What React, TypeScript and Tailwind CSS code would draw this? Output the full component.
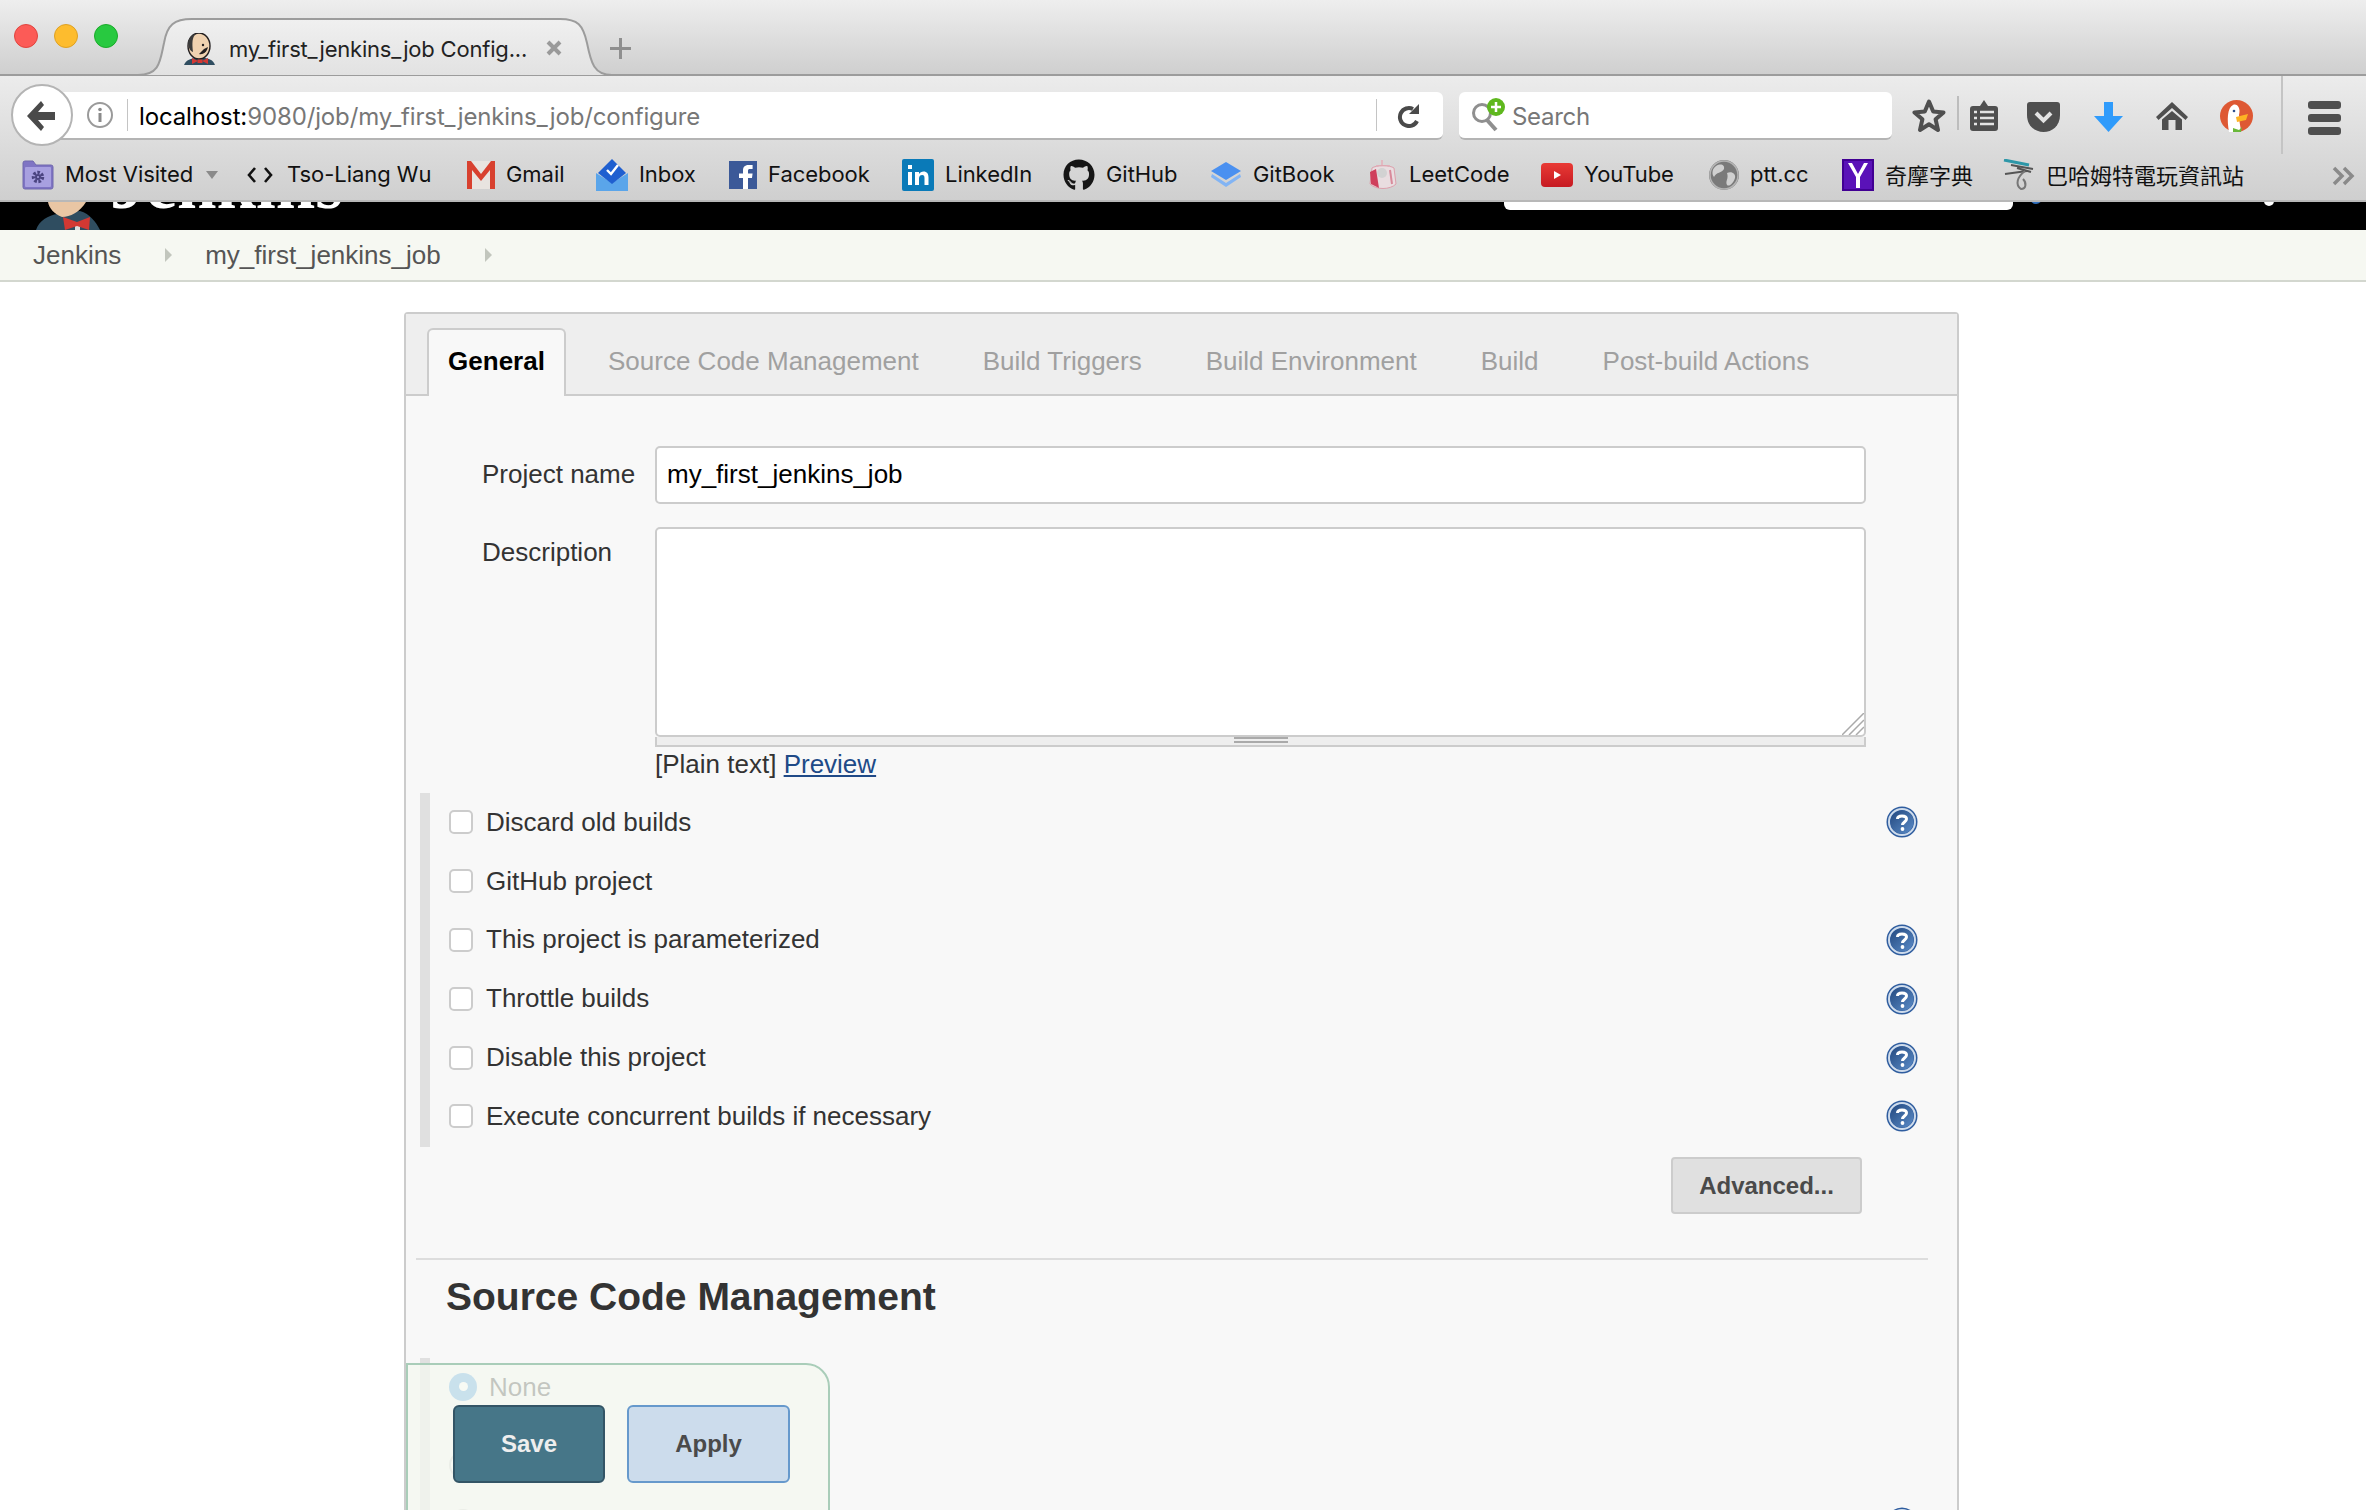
import { FaGithub } from "react-icons/fa";

const uiFont = "font-['Inter','Liberation_Sans',sans-serif]";

const Bookmark = ({ icon, label, iconW, textW, x }: { icon: React.ReactNode; label: string; iconW: number; textW: number; x: number }) => (
  <div className="flex items-center gap-[11px]" style={{ marginLeft: x, width: iconW + 11 + textW }}>
    <div className="flex items-center justify-center shrink-0" style={{ width: iconW }}>{icon}</div>
    <span className="whitespace-nowrap pb-[2px] text-[22px] text-[#111] tracking-[-0.05px]">{label}</span>
  </div>
);

const FolderIcon = () => (
  <svg width="32" height="32" viewBox="0 0 32 32">
    <path d="M1 4 a2 2 0 0 1 2-2 h8 l3 4 h15 a2 2 0 0 1 2 2 v20 a2 2 0 0 1-2 2 h-26 a2 2 0 0 1-2-2z" fill="#7f74c4" stroke="#7068ad" />
    <rect x="3" y="8" width="26" height="20" rx="1" fill="#a8a0e0" />
    <circle cx="16" cy="18" r="4.5" fill="none" stroke="#4b4480" strokeWidth="3.5" strokeDasharray="2.5 1.5" />
    <circle cx="16" cy="18" r="3" fill="#4b4480" />
    <circle cx="16" cy="18" r="1" fill="#a8a0e0" />
  </svg>
);

const CodeIcon = () => (
  <svg width="26" height="16" viewBox="0 0 26 16" fill="none">
    <path d="M8 1 L2 8 L8 15 M18 1 L24 8 L18 15" stroke="#111" strokeWidth="2.6" />
  </svg>
);

const GmailIcon = () => (
  <svg width="28" height="32" viewBox="0 0 28 32">
    <rect x="0" y="2" width="28" height="28" fill="#e8e4e0" />
    <path d="M0 30 V2 h4 L14 15 L24 2 h4 v28 h-5 V11 L14 22 L5 11 V30z" fill="#d8412f" />
  </svg>
);

const InboxIcon = () => (
  <svg width="32" height="32" viewBox="0 0 32 32">
    <path d="M0 14 L16 24 L32 14 V32 H0z" fill="#5aa5ea" />
    <path d="M2 14 L16 0 L30 14 L16 25z" fill="#1f5fd0" />
    <path d="M11 11 l4 4 l7-9" fill="none" stroke="#fff" strokeWidth="2.4" />
  </svg>
);

const FacebookIcon = () => (
  <svg width="28" height="28" viewBox="0 0 28 28">
    <rect width="28" height="28" fill="#3b5998" />
    <path d="M19 28 V17 h4 l.6-4.5 H19 V10 c0-1.4.5-2 2-2 h2.6 V4 h-4 C15.5 4 14 6.3 14 9.5 v3 h-4 V17 h4 v11z" fill="#fff" />
  </svg>
);

const LinkedInIcon = () => (
  <svg width="32" height="32" viewBox="0 0 32 32">
    <rect width="32" height="32" rx="2" fill="#0a7ab8" />
    <rect x="6" y="13" width="4" height="13" fill="#fff" />
    <rect x="6" y="6" width="4" height="4" fill="#fff" />
    <path d="M13 13 h4 v2 c1-1.5 2.5-2.4 4.5-2.4 c3.5 0 5 2.2 5 6 V26 h-4 v-7 c0-2-.6-3-2.3-3 c-1.8 0-3.2 1.2-3.2 3.4 V26 h-4z" fill="#fff" />
  </svg>
);

const GitBookIcon = () => (
  <svg width="32" height="26" viewBox="0 0 32 26">
    <path d="M16 0 L31 9 L16 18 L1 9z" fill="#4a90f0" />
    <path d="M2 12 L16 21 L30 12 L31 15 L16 25 L1 15z" fill="#82b4f4" />
  </svg>
);

const LeetCodeIcon = () => (
  <svg width="30" height="30" viewBox="0 0 30 30" fill="none">
    <path d="M14 0 L14 6 M8 6 H22" stroke="#e3b8c0" strokeWidth="2" />
    <path d="M4 8 C8 5 22 5 26 8 L28 24 C22 30 8 30 2 24z" fill="#e9dde0" stroke="#dca0ac" />
    <path d="M2 12 L8 9 L11 28 L3 24z" fill="#cf3f5c" />
    <circle cx="14" cy="13" r="5" fill="#d2d2d2" />
    <path d="M22 10 L24 24" stroke="#d88a9a" strokeWidth="2" />
  </svg>
);

const YouTubeIcon = () => (
  <svg width="32" height="24" viewBox="0 0 32 24">
    <defs>
      <linearGradient id="ytFill" x1="0" y1="0" x2="0" y2="1">
        <stop offset="0" stopColor="#e93a35" />
        <stop offset="1" stopColor="#c61a22" />
      </linearGradient>
    </defs>
    <rect width="32" height="24" rx="4" fill="url(#ytFill)" />
    <path d="M13 8 L20 12 L13 16z" fill="#fff" />
  </svg>
);

const GlobeIcon = () => (
  <svg width="30" height="30" viewBox="0 0 30 30">
    <circle cx="15" cy="15" r="15" fill="#7a7a7a" />
    <path d="M7 6 C12 3 16 5 15 9 C13 13 7 12 5 17 C2 13 4 8 7 6z M18 13 C23 11 27 14 26 18 C24 24 20 27 18 25 C16 21 20 19 18 13z" fill="#d0d0d0" />
    <circle cx="15" cy="15" r="14" fill="none" stroke="#b4b4b4" strokeWidth="1.5" />
  </svg>
);

const YahooIcon = () => (
  <svg width="32" height="32" viewBox="0 0 32 32">
    <rect width="32" height="32" fill="#410093" />
    <rect x="2" y="2" width="28" height="28" fill="#5a12b8" />
    <path d="M6 4 h4 l6 11 l6-11 h4 l-8 14 v11 h-4 v-11z" fill="#fff" />
  </svg>
);

const BahamutIcon = () => (
  <svg width="32" height="32" viewBox="0 0 32 32" fill="none">
    <path d="M1 1 L26 6" stroke="#2d97a8" strokeWidth="3" />
    <path d="M8 6 L30 10 M2 15 L24 12 M14 9 L28 13" stroke="#555" strokeWidth="2" />
    <path d="M22 12 C14 18 12 26 18 30 C23 30 24 24 20 20" stroke="#777" strokeWidth="2" />
  </svg>
);

const HelpIcon = () => (
  <svg width="32" height="32" viewBox="0 0 32 32" className="shrink-0">
    <defs>
      <linearGradient id="helpFill" x1="0" y1="0" x2="1" y2="1">
        <stop offset="0" stopColor="#24497f" />
        <stop offset="1" stopColor="#5b8cc8" />
      </linearGradient>
    </defs>
    <circle cx="16" cy="16" r="15.5" fill="#2f5d9f" />
    <circle cx="16" cy="16" r="13" fill="none" stroke="#cfdcec" strokeWidth="2" />
    <circle cx="16" cy="16" r="11.5" fill="url(#helpFill)" />
    <path d="M11.5 13 C11.5 9 20.5 9 20.5 13 C20.5 16 16.5 16 16.5 19" fill="none" stroke="#fff" strokeWidth="3" />
    <circle cx="16.5" cy="23" r="1.9" fill="#fff" />
  </svg>
);

const OptionRow = ({ label, help }: { label: string; help?: boolean }) => (
  <div className="flex h-[58.8px] items-center pl-[19px]">
    <span className="w-[24px] h-[24px] rounded-[5px] border-2 border-[#ccc] bg-white shrink-0" />
    <span className="ml-[13px] text-[26px] text-[#333]">{label}</span>
    {help && <span className="ml-auto"><HelpIcon /></span>}
  </div>
);

const App = () => {
  return (
    <div className="relative w-[2366px] h-[1510px] overflow-hidden bg-white font-['Liberation_Sans',Arial,sans-serif]">
      {/* tab strip */}
      <div className="relative h-[76px] bg-gradient-to-b from-[#eeeeee] to-[#cfcfcf] border-b-2 border-[#9c9c9c]">
        <div className="absolute left-[14px] top-[24px] flex gap-[16px]">
          <span className="w-[24px] h-[24px] rounded-full bg-[#fc5b57] border border-[#e0443e]" />
          <span className="w-[24px] h-[24px] rounded-full bg-[#fdbc2e] border border-[#dea123]" />
          <span className="w-[24px] h-[24px] rounded-full bg-[#28c940] border border-[#1aab29]" />
        </div>
        <svg className="absolute left-[136px] top-[17px]" width="480" height="60" viewBox="0 0 480 60">
          <defs>
            <linearGradient id="tabFill" x1="0" y1="0" x2="0" y2="1">
              <stop offset="0" stopColor="#f0f0f0" />
              <stop offset="1" stopColor="#e2e2e2" />
            </linearGradient>
          </defs>
          <path d="M2 58 C24 58 24 44 28 26 C31 8 38 2 56 2 H424 C442 2 447 8 451 26 C455 46 458 58 476 58 Z" fill="url(#tabFill)" />
          <path d="M2 58 C24 58 24 44 28 26 C31 8 38 2 56 2 H424 C442 2 447 8 451 26 C455 46 458 58 476 58" fill="none" stroke="#9c9c9c" strokeWidth="2" />
        </svg>
        <div className={`absolute left-[183px] top-[32px] flex items-center ${uiFont}`}>
          <svg width="32" height="32" viewBox="0 0 32 32">
            <path d="M1 32 C3 27 8 25 14 25 H20 C26 25 30 27 32 32z" fill="#2f4d60" />
            <ellipse cx="16" cy="13" rx="11" ry="13" fill="#f0d2b0" stroke="#231f20" strokeWidth="1.4" />
            <path d="M5 9 C6 4 10 1 13 1 C9 4 9 10 10 19 C7 18 5 14 5 9z" fill="#3b3b3b" />
            <path d="M16 21 C20 22 24 19 25 14 L21 16z" fill="#231f20" />
            <circle cx="20" cy="12" r="1.2" fill="#231f20" />
            <path d="M15 28 L9 25 V31z M19 28 L25 25 V31z" fill="#d33833" />
            <rect x="14.5" y="26.5" width="5" height="3.5" fill="#d33833" />
          </svg>
          <span className="ml-[14px] pt-[1px] text-[22px] text-[#222] whitespace-nowrap tracking-[-0.2px]">my_first_jenkins_job Config...</span>
        </div>
        <svg className="absolute left-[546px] top-[40px]" width="16" height="16" viewBox="0 0 16 16">
          <path d="M2 2 L14 14 M14 2 L2 14" stroke="#9a9a9a" strokeWidth="4" />
        </svg>
        <svg className="absolute left-[610px] top-[38px]" width="21" height="21" viewBox="0 0 21 21">
          <path d="M10.5 0 V21 M0 10.5 H21" stroke="#8f8f8f" strokeWidth="3" />
        </svg>
      </div>

      <div className="bg-gradient-to-b from-[#ececec] to-[#cfcfcf] border-b-2 border-[#b8b8b8]">
        {/* nav bar */}
        <div className={`relative flex h-[74px] items-start pt-[16px] ${uiFont}`}>
          <div className="flex h-[48px] w-[1403px] ml-[40px] items-center rounded-r-[6px] bg-white border-b-2 border-[#b4b4b4]">
            <svg className="ml-[47px]" width="26" height="26" viewBox="0 0 26 26">
              <circle cx="13" cy="13" r="12" fill="none" stroke="#9a9a9a" strokeWidth="2" />
              <circle cx="13" cy="7.5" r="1.8" fill="#8a8a8a" />
              <rect x="11.5" y="11" width="3" height="9" fill="#8a8a8a" />
            </svg>
            <div className="ml-[14px] h-[32px] w-[1px] bg-[#c4c4c4]" />
            <span className="ml-[11px] pt-[4px] text-[24px] text-[#777] whitespace-nowrap tracking-[-0.13px]">
              <span className="text-black">localhost:</span>9080/job/my_first_jenkins_job/configure
            </span>
            <div className="ml-auto h-[32px] w-[1px] bg-[#c4c4c4]" />
            <svg className="ml-[20px] mr-[22px] mt-[1px]" width="24" height="24" viewBox="0 0 24 24" fill="none">
              <path d="M20 17 A9 9 0 1 1 16 5" stroke="#4a4a4a" strokeWidth="4" />
              <path d="M22 0 V10 H12z" fill="#4a4a4a" />
            </svg>
          </div>
          <div className="flex h-[48px] w-[433px] ml-[16px] items-center rounded-[6px] bg-white border-b-2 border-[#b4b4b4]">
            <svg className="ml-[11px]" width="36" height="34" viewBox="0 0 36 34" fill="none">
              <circle cx="12" cy="15" r="8.5" stroke="#8f8f8f" strokeWidth="3" />
              <path d="M17 22 L26 32" stroke="#8f8f8f" strokeWidth="4" />
              <circle cx="26" cy="9" r="9" fill="#5fb81e" />
              <path d="M26 4 V14 M21 9 H31" stroke="#fff" strokeWidth="2.5" />
            </svg>
            <span className="ml-[6px] pt-[4px] text-[24px] text-[#777] tracking-[-0.3px]">Search</span>
          </div>
          <div className="absolute left-[1957px] top-[20px] h-[34px] w-[2px] bg-[#bdbdbd]" />
          <div className="absolute left-[2281px] top-[0px] h-[78px] w-[2px] bg-[#c4c4c4]" />
          <svg className="absolute left-[1912px] top-[23px]" width="34" height="34" viewBox="0 0 34 34">
            <path d="M17 2.5 L21.2 12.6 L31.5 13.4 L23.6 20.3 L26 31 L17 25.3 L8 31 L10.4 20.3 L2.5 13.4 L12.8 12.6z" fill="none" stroke="#4f4f4f" strokeWidth="4" strokeLinejoin="round" />
          </svg>
          <svg className="absolute left-[1969px] top-[24px]" width="30" height="32" viewBox="0 0 30 32">
            <path d="M4 6 H11 L15 0 L19 6 H26 a3 3 0 0 1 3 3 V28 a3 3 0 0 1-3 3 H4 a3 3 0 0 1-3-3 V9 a3 3 0 0 1 3-3z" fill="#4f4f4f" />
            <path d="M11 12 H25 M11 18 H25 M11 24 H25" stroke="#e4e4e4" strokeWidth="2.5" />
            <path d="M5 12 H8 M5 18 H8 M5 24 H8" stroke="#e4e4e4" strokeWidth="2.5" />
          </svg>
          <svg className="absolute left-[2027px] top-[26px]" width="33" height="30" viewBox="0 0 33 30">
            <path d="M3 0 H30 a3 3 0 0 1 3 3 V13 C33 24 25 30 16.5 30 C8 30 0 24 0 13 V3 a3 3 0 0 1 3-3z" fill="#4f4f4f" />
            <path d="M9 11 L16.5 18.5 L24 11" fill="none" stroke="#e4e4e4" strokeWidth="4" />
          </svg>
          <svg className="absolute left-[2094px] top-[26px]" width="29" height="30" viewBox="0 0 29 30">
            <path d="M10 0 H19 V14 H29 L14.5 30 L0 14 H10z" fill="#2f9bfb" />
          </svg>
          <svg className="absolute left-[2156px] top-[26px]" width="32" height="28" viewBox="0 0 32 28">
            <path d="M16 0 L32 15 L29.5 18 L16 6 L2.5 18 L0 15z" fill="#4f4f4f" />
            <path d="M6 17.5 L16 9 L26 17.5 V28 H19.5 V18 H12.5 V28 H6z" fill="#4f4f4f" />
          </svg>
          <svg className="absolute left-[2220px] top-[24px]" width="33" height="32" viewBox="0 0 33 32">
            <ellipse cx="16.5" cy="16" rx="16.5" ry="16" fill="#de5833" />
            <path d="M9 32 C7 20 7 8 13 5 C17 3 21 8 19 15 C19 22 21 28 21 32z" fill="#fff" />
            <path d="M16 17 L28 14 L26 20 L17 22z" fill="#fdb324" />
            <path d="M13 28 L19 30 L22 27 L21 32 H13z" fill="#6ab83a" />
            <circle cx="14" cy="11" r="1.3" fill="#2d4f8e" />
          </svg>
          <div className="absolute left-[2308px] top-[25px] flex flex-col gap-[5px]">
            <span className="block w-[33px] h-[8px] rounded-[3px] bg-[#4f4f4f]" />
            <span className="block w-[33px] h-[8px] rounded-[3px] bg-[#4f4f4f]" />
            <span className="block w-[33px] h-[8px] rounded-[3px] bg-[#4f4f4f]" />
          </div>
          {/* back button */}
          <div className="absolute left-[11px] top-[8px] flex h-[62px] w-[62px] items-center justify-center rounded-full bg-white border-2 border-[#b4b4b4]">
            <svg className="mt-[1px] mr-[2px]" width="30" height="32" viewBox="0 0 30 32">
              <path d="M15 1 L1 16 L15 31 L18 27 L12 20 H29 V12 H12 L18 5z" fill="#4a4a4a" />
            </svg>
          </div>
        </div>

        {/* bookmarks toolbar */}
        <div className={`relative flex h-[50px] items-center ${uiFont}`}>
          <Bookmark x={22} iconW={32} textW={129} label="Most Visited" icon={<FolderIcon />} />
          <span className="ml-[12px] w-0 h-0 border-x-[6px] border-x-transparent border-t-[8px] border-t-[#8a8a8a]" />
          <span className="ml-[29px] w-[26px] shrink-0"><CodeIcon /></span>
          <span className="ml-[14px] w-[146px] pb-[2px] text-[22px] text-[#111] tracking-[-0.05px] whitespace-nowrap">Tso-Liang Wu</span>
          <Bookmark x={34} iconW={28} textW={58} label="Gmail" icon={<GmailIcon />} />
          <Bookmark x={32} iconW={32} textW={56} label="Inbox" icon={<InboxIcon />} />
          <Bookmark x={34} iconW={28} textW={102} label="Facebook" icon={<FacebookIcon />} />
          <Bookmark x={32} iconW={32} textW={87} label="LinkedIn" icon={<LinkedInIcon />} />
          <Bookmark x={31} iconW={32} textW={71} label="GitHub" icon={<FaGithub size={32} className="text-[#161616]" />} />
          <Bookmark x={33} iconW={32} textW={81} label="GitBook" icon={<GitBookIcon />} />
          <Bookmark x={34} iconW={30} textW={99} label="LeetCode" icon={<LeetCodeIcon />} />
          <Bookmark x={33} iconW={32} textW={92} label="YouTube" icon={<YouTubeIcon />} />
          <Bookmark x={33} iconW={30} textW={60} label="ptt.cc" icon={<GlobeIcon />} />
          <div className="ml-[32px] flex items-center gap-[11px]">
            <YahooIcon />
            <span className="pb-[2px] text-[22px] text-[#111] font-['Noto_Sans_CJK_TC',sans-serif] whitespace-nowrap">奇摩字典</span>
          </div>
          <div className="ml-[30px] flex items-center gap-[11px]">
            <BahamutIcon />
            <span className="pb-[2px] text-[22px] text-[#111] font-['Noto_Sans_CJK_TC',sans-serif] whitespace-nowrap">巴哈姆特電玩資訊站</span>
          </div>
          <svg className="absolute left-[2332px] top-[16px]" width="24" height="20" viewBox="0 0 24 20" fill="none">
            <path d="M2 2 L10 10 L2 18 M12 2 L20 10 L12 18" stroke="#8a8a8a" strokeWidth="3.5" />
          </svg>
        </div>
      </div>

      {/* jenkins header, mostly hidden under the toolbar */}
      <div className="relative h-[28px] bg-black overflow-hidden">
        <svg className="absolute left-[34px] top-0" width="70" height="28" viewBox="0 0 70 28">
          <path d="M2 28 C5 19 14 13 24 12 L46 9 C56 12 62 20 66 28z" fill="#2f4d60" />
          <path d="M14 0 C15 6 20 12 28 15 C36 15 46 10 52 0z" fill="#e9c6a4" />
          <rect x="41" y="23" width="5" height="5" fill="#ddd" />
          <path d="M29 15 L43 20 L56 15 L55 28 L43 24 L31 28z" fill="#d33833" />
        </svg>
        <div className="absolute left-[110px] top-[-53px] text-[71px] leading-[70px] font-bold text-white font-['Liberation_Serif',serif]">Jenkins</div>
        <div className="absolute left-[1504px] top-[-16px] h-[24px] w-[509px] rounded-[6px] bg-white" />
        <div className="absolute left-[2030px] top-[-10px] h-[12px] w-[12px] rounded-full bg-[#2f6ebc]" />
        <div className="absolute left-[2264px] top-[-6px] h-[10px] w-[10px] rounded-full bg-white" />
      </div>

      {/* breadcrumbs */}
      <div className="flex h-[52px] items-center bg-[#f6f8f2] border-b-2 border-[#d3d7cf] text-[26px] text-[#555]">
        <span className="ml-[33px]">Jenkins</span>
        <span className="ml-[44px] w-0 h-0 border-y-[7px] border-y-transparent border-l-[7px] border-l-[#c2c6bd]" />
        <span className="ml-[33px]">my_first_jenkins_job</span>
        <span className="ml-[44px] w-0 h-0 border-y-[7px] border-y-transparent border-l-[7px] border-l-[#c2c6bd]" />
      </div>

      {/* config panel */}
      <div className="ml-[404px] mt-[30px] w-[1555px] h-[1400px] rounded-t-[4px] border-2 border-[#ccc] bg-[#f8f8f8] text-[26px] text-[#333]">
        <div className="flex h-[82px] items-end bg-[#eeeeee] border-b-2 border-[#ccc] pl-[21px]">
          <div className="relative -mb-[2px] flex h-[68px] w-[139px] items-center justify-center rounded-t-[6px] border-2 border-b-0 border-[#ccc] bg-[#f8f8f8] pb-[3px] font-bold text-black">General</div>
          <div className="ml-[42px] flex h-[66px] items-center gap-[64px] text-[#a0a0a0]">
            <span>Source Code Management</span>
            <span>Build Triggers</span>
            <span>Build Environment</span>
            <span>Build</span>
            <span>Post-build Actions</span>
          </div>
        </div>

        <div className="flex mt-[50px] items-center">
          <span className="ml-[76px] w-[173px] pb-[2px]">Project name</span>
          <div className="flex h-[58px] w-[1211px] items-center rounded-[5px] border-2 border-[#ccc] bg-white pb-[2px] pl-[10px] text-black">my_first_jenkins_job</div>
        </div>

        <div className="flex mt-[23px]">
          <span className="ml-[76px] w-[173px] mt-[6px]">Description</span>
          <div className="w-[1211px]">
            <div className="relative h-[210px] rounded-[5px] border-2 border-[#ccc] bg-white">
              <svg className="absolute right-0 bottom-0" width="22" height="22" viewBox="0 0 22 22" fill="none">
                <path d="M0 22 L22 0 M7 22 L22 7 M14 22 L22 14" stroke="#aaa" strokeWidth="1.5" />
              </svg>
            </div>
            <div className="flex h-[10px] justify-center bg-[#eeeeee] border-x-2 border-b-2 border-[#ccc]">
              <span className="h-[6px] w-[54px] border-y-2 border-[#aaa]" />
            </div>
            <div className="mt-[2px] leading-[30px]">[Plain text] <span className="text-[#204a87] underline">Preview</span></div>
          </div>
        </div>

        <div className="mt-[14px] ml-[14px] mr-[39px] border-l-[10px] border-[#e0e0e0] pb-[1px]">
          <OptionRow label="Discard old builds" help />
          <OptionRow label="GitHub project" />
          <OptionRow label="This project is parameterized" help />
          <OptionRow label="Throttle builds" help />
          <OptionRow label="Disable this project" help />
          <OptionRow label="Execute concurrent builds if necessary" help />
        </div>

        <div className="mt-[10px] flex justify-end pr-[95px]">
          <div className="flex h-[57px] w-[191px] items-center justify-center rounded-[4px] border-2 border-[#ccc] bg-[#e0e0e0] pt-[1px] text-[24px] font-bold text-[#4a4a4a]">Advanced...</div>
        </div>

        <div className="mt-[44px] ml-[10px] w-[1512px] h-[2px] bg-[#dddddd]" />
        <div className="ml-[40px] mt-[15px] text-[39px] leading-[44px] font-bold text-[#333]">Source Code Management</div>

        <div className="mt-[39px] ml-[14px] mr-[39px] border-l-[10px] border-[#e0e0e0]">
          <div className="flex h-[93px] items-start pl-[19px] pt-[15px]">
            <span className="flex h-[28px] w-[28px] items-center justify-center rounded-full bg-[#4a9ae0]">
              <span className="h-[9px] w-[9px] rounded-full bg-white" />
            </span>
            <span className="ml-[12px] leading-[28px] text-[#333]">None</span>
          </div>
          <div className="flex h-[58px] items-start pl-[19px]">
            <span className="h-[28px] w-[28px] rounded-full border-2 border-[#ccc] bg-white" />
          </div>
          <div className="flex h-[59px] items-start pl-[19px]">
            <span className="h-[28px] w-[28px] rounded-full border-2 border-[#ccc] bg-white" />
            <span className="ml-auto -mt-[2px]"><HelpIcon /></span>
          </div>
        </div>
      </div>

      {/* sticky save bar */}
      <div className="absolute left-[406px] top-[1363px] flex h-[160px] w-[424px] items-start gap-[22px] rounded-tr-[24px] border-2 border-[#a9cdb9] bg-[#f4f8f0]/75 pl-[45px] pt-[40px]">
        <div className="flex h-[78px] w-[152px] items-center justify-center rounded-[6px] border-2 border-[#335566] bg-[#467688] text-[24px] font-bold text-[#eeeeee]">Save</div>
        <div className="flex h-[78px] w-[163px] items-center justify-center rounded-[6px] border-2 border-[#6699cc] bg-[#ccdcec] text-[24px] font-bold text-[#4a4a4a]">Apply</div>
      </div>
    </div>
  );
};

export default App;
